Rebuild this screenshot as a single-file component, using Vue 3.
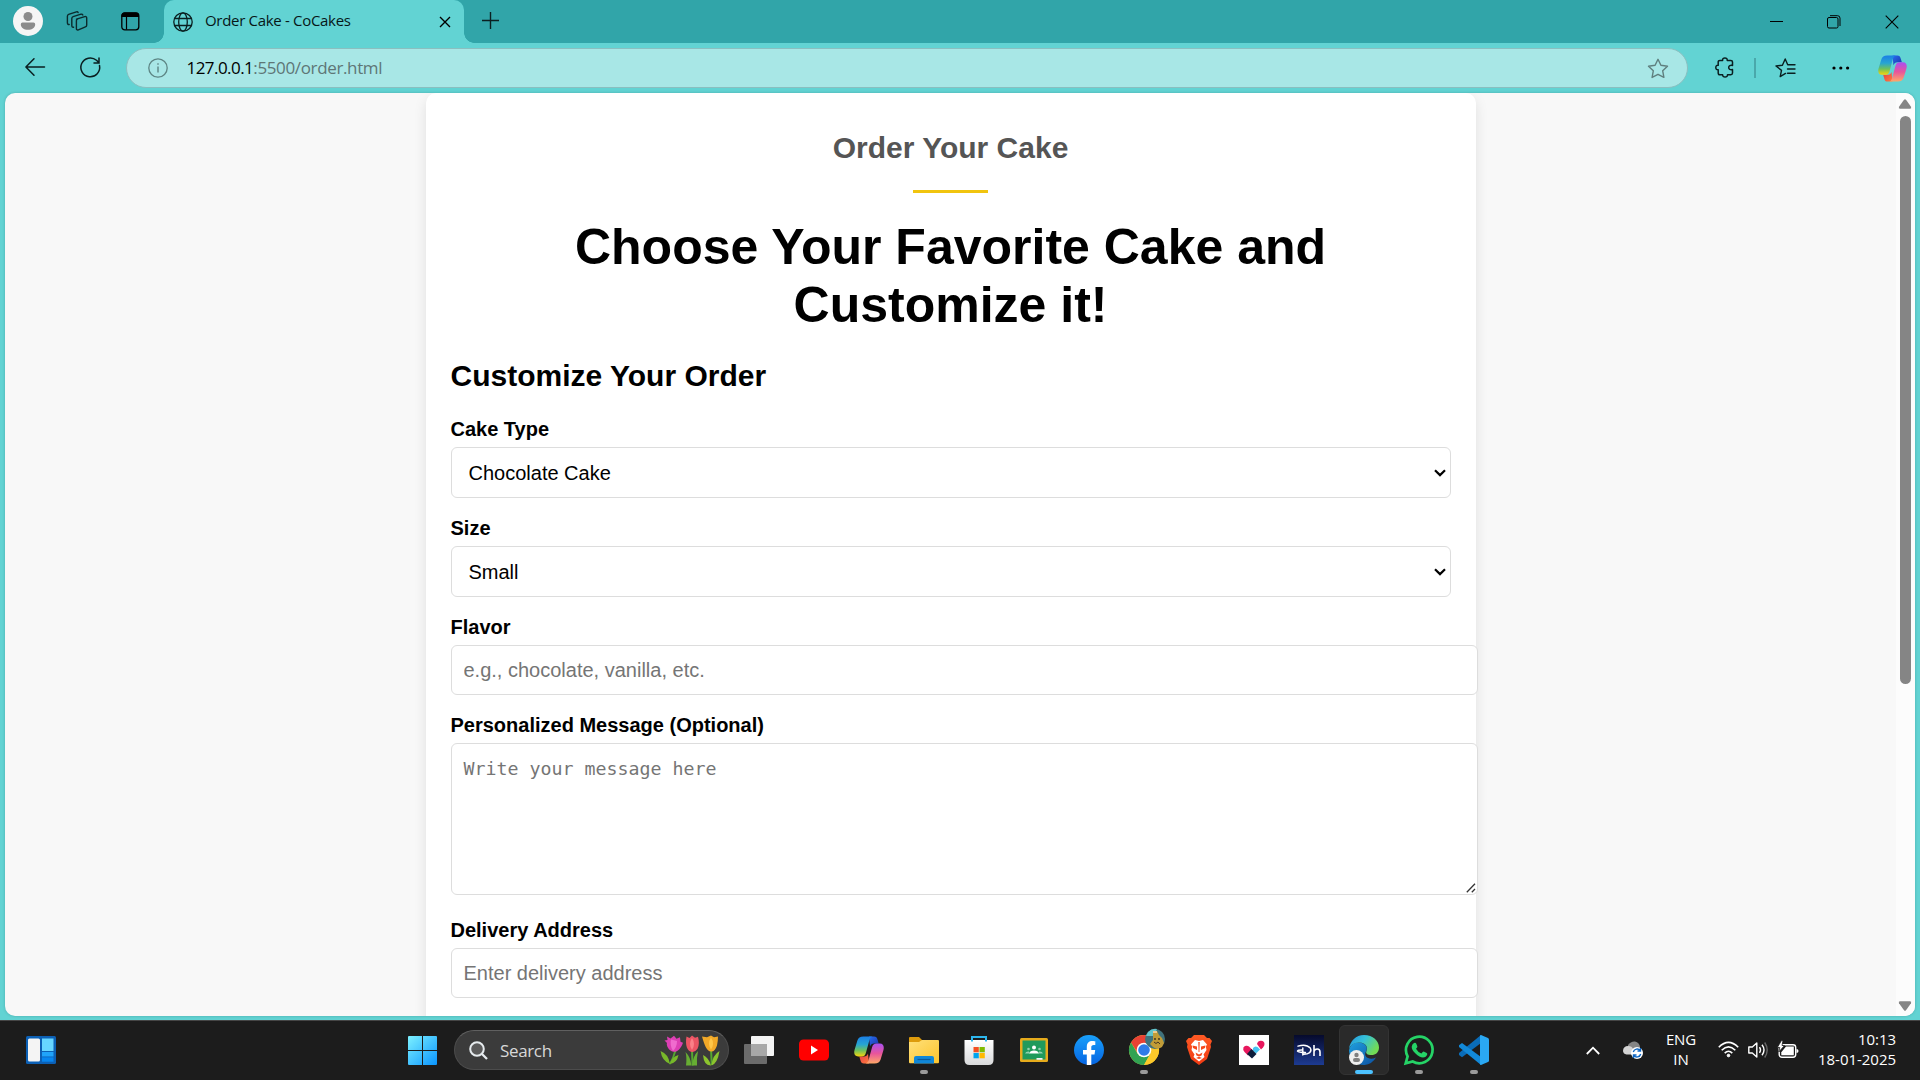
<script setup>
import { ref } from 'vue'

const cakeType = ref('Chocolate Cake')
const size = ref('Small')
const cakeTypes = ['Chocolate Cake', 'Vanilla Cake', 'Red Velvet Cake']
const sizes = ['Small', 'Medium', 'Large']

const apps = [
  { id: 'taskview' },
  { id: 'youtube' },
  { id: 'copilot' },
  { id: 'explorer', running: true },
  { id: 'store' },
  { id: 'classroom' },
  { id: 'facebook' },
  { id: 'chrome', running: true },
  { id: 'brave' },
  { id: 'heart' },
  { id: 'hotstar' },
  { id: 'edge', active: true },
  { id: 'whatsapp', running: true },
  { id: 'vscode', running: true }
]
</script>

<template>
  <div class="screen">
    <svg class="defs" width="0" height="0" aria-hidden="true">
      <defs>
        <linearGradient id="cpA" x1="0" y1="0" x2="0" y2="1">
          <stop offset="0" stop-color="#1b7fe6" /><stop offset=".4" stop-color="#27a5d2" />
          <stop offset=".7" stop-color="#6fc25b" /><stop offset="1" stop-color="#f7d40c" />
        </linearGradient>
        <linearGradient id="cpB" x1="0" y1="0" x2="0" y2="1">
          <stop offset="0" stop-color="#a850f2" /><stop offset=".5" stop-color="#e8559b" />
          <stop offset="1" stop-color="#ffa868" />
        </linearGradient>
        <linearGradient id="cpC" x1="0" y1="0" x2="1" y2="1">
          <stop offset="0" stop-color="#2a6cf0" /><stop offset="1" stop-color="#1835a8" />
        </linearGradient>
        <linearGradient id="cpD" x1="0" y1="0" x2="1" y2="1">
          <stop offset="0" stop-color="#e23c4a" /><stop offset="1" stop-color="#ff7d3c" />
        </linearGradient>
        <linearGradient id="winG" gradientUnits="userSpaceOnUse" x1="0" y1="0" x2="29" y2="29">
          <stop offset="0" stop-color="#7df1ff" /><stop offset="1" stop-color="#0a95ff" />
        </linearGradient>
        <linearGradient id="edgeA" x1="0" y1="0" x2="1" y2=".5">
          <stop offset="0" stop-color="#2394df" /><stop offset=".5" stop-color="#35c1d8" /><stop offset="1" stop-color="#72dc55" />
        </linearGradient>
        <linearGradient id="edgeB" x1="0" y1="0" x2="1" y2="1">
          <stop offset="0" stop-color="#1fa0e0" /><stop offset="1" stop-color="#0c50a0" />
        </linearGradient>
        <linearGradient id="fbG" x1="0" y1="0" x2="0" y2="1">
          <stop offset="0" stop-color="#19a0fa" /><stop offset="1" stop-color="#0564e2" />
        </linearGradient>
        <linearGradient id="folderG" x1="0" y1="0" x2="1" y2="1">
          <stop offset="0" stop-color="#ffe07a" /><stop offset="1" stop-color="#fcc42d" />
        </linearGradient>
        <linearGradient id="bagG" x1="0" y1="0" x2="0" y2="1">
          <stop offset="0" stop-color="#ffffff" /><stop offset="1" stop-color="#d9dadb" />
        </linearGradient>
        <linearGradient id="braveG" x1="0" y1="0" x2="0" y2="1">
          <stop offset="0" stop-color="#ff5a24" /><stop offset="1" stop-color="#f03a12" />
        </linearGradient>
        <linearGradient id="dhG" x1="0" y1="0" x2="0" y2="1">
          <stop offset="0" stop-color="#060a2c" /><stop offset="1" stop-color="#1d3b92" />
        </linearGradient>
        <symbol id="i-copilot" viewBox="0 0 30 28">
          <path d="M15 .5h5c2.200 0 3 1 3.500 3l1.200 4H20c-2 0-3.200 1-4 3z" fill="url(#cpC)" />
          <path d="M15 27.500H10c-2.200 0-3-1-3.500-3l-1.200-4H10c2 0 3.200-1 4-3z" fill="url(#cpD)" />
          <path d="M9.500.5h9c-1.700.3-2.500 1.500-3.200 4L12 16.500c-.9 3-2 4-4.500 4H4.200C.5 20.500-.4 17.300.6 13.800L3.400 4.600C4.300 1.800 6 .5 9.500.5z" fill="url(#cpA)" />
          <path d="M20.500 27.500h-9c1.700-.3 2.500-1.500 3.200-4L18 11.500c.9-3 2-4 4.500-4h3.300c3.700 0 4.600 3.200 3.600 6.700l-2.800 9.200c-.9 2.800-2.600 4.100-6.100 4.100z" fill="url(#cpB)" />
        </symbol>
      </defs>
    </svg>

    <header class="titlebar">
      <svg class="avatar" width="30" height="30" viewBox="0 0 30 30">
        <circle cx="15" cy="15" r="15" fill="#f5f5f5" />
        <circle cx="15" cy="10.500" r="4.500" fill="#8b8b8b" />
        <path d="M9.500 16.500h11q1.700 0 1.700 1.700c0 3.500-3 5.600-7.200 5.600s-7.200-2.100-7.200-5.600q0-1.700 1.700-1.700z" fill="#8b8b8b" />
      </svg>
      <svg class="spaces" width="22" height="22" viewBox="0 0 22 22" fill="none" stroke="#0b2a2c" stroke-width="1.400" stroke-linejoin="round" stroke-linecap="round">
        <path d="M10.500 9.200 18.700 6.600q2-.4 2 1.500v7.200q0 1.200-1.300 1.600l-7 2.900q-2 .6-2-1.400v-7.600q0-1.200 1.100-1.600z" />
        <path d="M7.600 17.200q-1.800.3-1.800-1.600V8.500q0-1.400 1.300-1.800l7.900-2.500q1.400-.3 1.800.8" />
        <path d="M3.200 14.500Q1.400 14.600 1.400 12.800V6.200q0-1.400 1.200-1.800L10.400 1.900q1.300-.3 1.700.6" />
      </svg>
      <svg class="tabs-icon" width="19" height="19" viewBox="0 0 19 19">
        <rect x=".8" y=".8" width="17" height="17" rx="3" fill="none" stroke="#000" stroke-width="1.300" />
        <path d="M.5 5V3.500Q.5.500 3.500.5h11.500q3 0 3 3V5z" />
        <path d="M5.500 5v12.500" stroke="#000" stroke-width="1.200" />
      </svg>
      <div class="tab">
        <svg width="20" height="20" viewBox="0 0 20 20" fill="none" stroke="#0a1f20" stroke-width="1.300">
          <circle cx="10" cy="10" r="9.200" /><ellipse cx="10" cy="10" rx="4.300" ry="9.200" /><path d="M1.500 6.500h17M1.500 13.500h17" />
        </svg>
        <span class="tab-title">Order Cake - CoCakes</span>
        <svg class="tab-close" width="12" height="12" viewBox="0 0 12 12" stroke="#000" stroke-width="1.400"><path d="M1 1l10 10M11 1 1 11" /></svg>
      </div>
      <svg class="plus" width="18" height="18" viewBox="0 0 18 18" stroke="#0a1f20" stroke-width="1.400"><path d="M8.500 0v17M0 8.500h17" /></svg>
      <div class="window-buttons">
        <svg width="13" height="13" viewBox="0 0 13 13"><path d="M0 6.500h13" stroke="#000" /></svg>
        <svg width="14" height="14" viewBox="0 0 14 14" fill="none" stroke="#000"><rect x=".5" y="2.500" width="10.500" height="10.500" rx="1.500" /><path d="M3 .7h7.500q2.500 0 2.500 2.500V11" /></svg>
        <svg width="14" height="14" viewBox="0 0 14 14" stroke="#000" stroke-width="1.100"><path d="M.7.7l12.600 12.600M13.300.7.7 13.300" /></svg>
      </div>
    </header>

    <div class="toolbar">
      <svg class="back" width="20" height="18" viewBox="0 0 20 18" fill="none" stroke="#0a1f20" stroke-width="1.500" stroke-linecap="round" stroke-linejoin="round"><path d="M9 .8.900 9 9 17.200M1 9h18.500" /></svg>
      <svg class="reload" width="21" height="21" viewBox="0 0 21 21" fill="none" stroke="#0a1f20" stroke-width="1.500" stroke-linecap="round"><path d="M19.500 8.500A9.400 9.400 0 1 1 16.500 3.300L19 5.800M19 1v4.900h-5" /></svg>
      <div class="address">
        <svg width="20" height="20" viewBox="0 0 20 20" fill="none" stroke="#5d8584" stroke-width="1.300"><circle cx="10" cy="10" r="9.200" /><path d="M10 8.500v6M10 5.200v1.500" stroke-width="1.400" /></svg>
        <span class="url"><b>127.0.0.1</b>:5500/order.html</span>
        <svg class="star" width="22" height="21" viewBox="0 0 22 21" fill="none" stroke="#5f7f7e" stroke-width="1.400" stroke-linejoin="round"><path d="M11 1.300l2.900 6 6.600.9-4.800 4.600 1.200 6.600L11 16.300l-5.900 3.100 1.200-6.600L1.500 8.200l6.600-.9z" /></svg>
      </div>
      <svg class="puzzle" width="20" height="21" viewBox="0 0 20 21" fill="none" stroke="#0a1f20" stroke-width="1.500" stroke-linejoin="round"><path d="M7.600 3.400C7.400 1.800 8.500.9 9.900.9s2.500.9 2.300 2.500h3.600q1.700 0 1.700 1.700v3.300c-2.300-.5-3.800.4-3.800 2.100s1.500 2.600 3.800 2.100v3.500q0 1.700-1.700 1.700h-3.300c.1 1.500-1 2.300-2.400 2.300s-2.600-.8-2.500-2.300H4.900q-1.700 0-1.700-1.700v-3.300C1.500 12.900.8 11.900.8 10.500s.9-2.400 2.400-2.200V5.100q0-1.700 1.700-1.700z" /></svg>
      <span class="divider"></span>
      <svg class="favs" width="21" height="20" viewBox="0 0 21 20" fill="none" stroke="#0a1f20" stroke-width="1.400" stroke-linejoin="round" stroke-linecap="round"><path d="M10.500 15.400 5.200 18.600l1.300-6.200L1 7.900l6.400-.7L10.200 1l2.500 5.700H20M12.500 11H20M12.500 15.200H20" /></svg>
      <svg class="dots" width="18" height="4" viewBox="0 0 18 4"><circle cx="2" cy="2" r="1.600" /><circle cx="8.800" cy="2" r="1.600" /><circle cx="15.600" cy="2" r="1.600" /></svg>
      <svg class="copilot-btn" width="29" height="27"><use href="#i-copilot" /></svg>
    </div>

    <div class="viewport">
      <main class="page">
        <section class="card">
          <h2 class="section-title">Order Your Cake</h2>
          <div class="rule"></div>
          <h1>Choose Your Favorite Cake and Customize it!</h1>
          <h2 class="form-title">Customize Your Order</h2>
          <form @submit.prevent>
            <label for="type">Cake Type</label>
            <div class="select-wrap">
              <select id="type" v-model="cakeType"><option v-for="c in cakeTypes" :key="c">{{ c }}</option></select>
              <svg class="caret" width="12" height="8" viewBox="0 0 12 8" fill="none" stroke="#000" stroke-width="2.200"><path d="M1 1.200l5 4.900 5-4.900" /></svg>
            </div>
            <label for="size">Size</label>
            <div class="select-wrap">
              <select id="size" v-model="size"><option v-for="s in sizes" :key="s">{{ s }}</option></select>
              <svg class="caret" width="12" height="8" viewBox="0 0 12 8" fill="none" stroke="#000" stroke-width="2.200"><path d="M1 1.200l5 4.900 5-4.900" /></svg>
            </div>
            <label for="flavor">Flavor</label>
            <input id="flavor" type="text" placeholder="e.g., chocolate, vanilla, etc." />
            <label for="msg">Personalized Message (Optional)</label>
            <div class="area-wrap">
              <textarea id="msg" placeholder="Write your message here"></textarea>
              <svg class="grip" width="10" height="10" viewBox="0 0 10 10" stroke="#333" stroke-width="1.300"><path d="M.8 9.200 9 .8M5.800 9.200 9 6" /></svg>
            </div>
            <label for="addr">Delivery Address</label>
            <input id="addr" type="text" placeholder="Enter delivery address" />
          </form>
        </section>
      </main>
      <div class="scrollbar">
        <svg width="14" height="10" viewBox="0 0 14 10"><path d="M6 .7q1-1 2 0l5 7q.8 1.800-1 2H2q-1.800-.2-1-2z" fill="#858585" /></svg>
        <div class="thumb"></div>
        <svg class="down" width="14" height="10" viewBox="0 0 14 10"><path d="M6 9.300q1 1 2 0l5-7q.8-1.800-1-2H2Q.2.500 1 2.300z" fill="#858585" /></svg>
      </div>
    </div>

    <footer class="taskbar">
      <svg class="widgets" width="30" height="28" viewBox="0 0 30 28">
        <rect width="30" height="28" rx="1.500" fill="#0c60b5" />
        <rect x="2" y="2.500" width="12" height="23" rx="1.500" fill="#f4f4f4" />
        <rect x="16" y="2.500" width="11.500" height="12.500" fill="#67d6ff" /><rect x="16" y="16" width="11.500" height="4.500" fill="#20a4fa" /><rect x="16" y="21.300" width="11.500" height="4.400" fill="#0786ef" />
      </svg>
      <svg class="start" width="29" height="29" viewBox="0 0 29 29" fill="url(#winG)"><path d="M1 0h13v14H0V1q0-1 1-1zM15 0h13q1 0 1 1v13H15zM0 15h14v14H1q-1 0-1-1zM15 15h14v13q0 1-1 1H15z" /></svg>
      <div class="search">
        <svg class="glass" width="19" height="19" viewBox="0 0 19 19" fill="#5a5a5a" stroke="#e6ebee" stroke-width="2"><circle cx="8" cy="8" r="6.800" /><path d="M13 13l5 5" stroke-width="2.300" /></svg>
        <span>Search</span>
        <svg class="tulips" width="60" height="31" viewBox="0 0 60 31">
          <g fill="#55a630"><path d="M9 29q4-7 5.500-14l2 .5q-2 7-6 14z" /><path d="M.5 16q8 3 9.500 13Q2 26 .5 16zM18.500 20q-7 2-8.500 9 7-1 8.500-9z" fill="#78b82a" /><path d="M31 14h2l.5 16.500h-2z" /><path d="M25.500 17q5 5 6 13.500h-5.500q1-8-.5-13.500zM38 16q-5 5-6 14.500h5q-.5-8 1-14.500z" fill="#67ad33" /><path d="M50 14h2l.8 16h-2z" /><path d="M43 20q6 3 8 10.500-7 .5-8-10.500zM59.500 16q-7 4-8 14.500 6-2 8-14.500z" fill="#8cc42e" /></g>
          <path d="M7 1.500l3.500 2L14 .8l2.500 3 3.500-1.500.5 4.500 2.500 1c-2 6-6 9.500-9.500 9C8.500 16 6 10 7 8L4.500 5.500l3-.5z" fill="#dd3fb4" /><path d="M11 4.500q-1.500 6 2 11.500 4-4 4-10" fill="#f06cce" />
          <path d="M26.500 1.500l3 1.500L32 .5l3 2.300 3-1q2 7-.5 12Q35 17.500 32 17c-5-.5-7-7-5.500-15.500z" fill="#ec5564" /><path d="M32 3q-4 6 0 12 4-6 0-12z" fill="#fb8088" />
          <path d="M42 1.500l5 .8L51 .5l3 1.800 4-.8q0 4-1 9-2 6-5.500 6c-5 .3-7-7-9.500-15z" fill="#f2a928" /><path d="M51 2.500q-4 6 0 12 4-6 0-12z" fill="#ffc648" />
        </svg>
      </div>
      <div class="apps">
        <div v-for="a in apps" :key="a.id" class="app" :class="{ active: a.active, running: a.running }">
          <svg v-if="a.id === 'taskview'" width="30" height="30" viewBox="0 0 30 30"><rect x="7" y="1" width="23" height="20" rx="1" fill="#f3f3f3" /><rect y="9" width="23" height="20" rx="1" fill="#6b6b6b" /><rect x="7" y="9" width="16" height="12" fill="#a8a8a8" /></svg>
          <svg v-else-if="a.id === 'youtube'" width="30" height="30" viewBox="0 0 30 30"><rect y="4.500" width="30" height="21" rx="4.500" fill="#f00" /><path d="M12 10.500v9l7-4.500z" fill="#fff" /></svg>
          <svg v-else-if="a.id === 'copilot'" width="30" height="28"><use href="#i-copilot" /></svg>
          <svg v-else-if="a.id === 'explorer'" width="30" height="30" viewBox="0 0 30 30"><path d="M1 2h9l3 3v6H0V3q0-1 1-1z" fill="#dd9b0c" /><path d="M0 7h10l3-2h16q1 0 1 1v21q0 1.300-1 1.300H1q-1 0-1-1.300z" fill="url(#folderG)" /><path d="M5 28.500V23q0-2 2-2h16q2 0 2 2v5.500z" fill="#1087d8" /><path d="M8.500 24.500h13" stroke="#0b5a9c" stroke-width="1.200" /></svg>
          <svg v-else-if="a.id === 'store'" width="30" height="30" viewBox="0 0 30 30"><path d="M8 8V2h14v6" fill="none" stroke="#2db7ee" stroke-width="2" /><path d="M.5 5h29v20q0 5-5 5h-19q-5 0-5-5z" fill="url(#bagG)" /><path d="M8 6.500V2M22 6.500V2" stroke="#2db7ee" stroke-width="2" /><path d="M9.500 12h5.300v5.300H9.500z" fill="#f25022" /><path d="M15.500 12h5.300v5.300h-5.300z" fill="#7fba00" /><path d="M9.500 18h5.300v5.300H9.500z" fill="#00a4ef" /><path d="M15.500 18h5.300v5.300h-5.300z" fill="#ffb900" /></svg>
          <svg v-else-if="a.id === 'classroom'" width="28" height="24" viewBox="0 0 28 24"><rect width="28" height="24" rx="1.500" fill="#e6ab1c" /><rect x="2.500" y="2.500" width="23" height="19" fill="#1f9a5b" /><g fill="#fff"><circle cx="14" cy="9.500" r="2" /><path d="M9 15.500q1-3 5-3t5 3z" /></g><g fill="#8fd0ae"><circle cx="8.500" cy="11" r="1.300" /><circle cx="19.500" cy="11" r="1.300" /><path d="M5 15.500q1-2.500 4-2v2zM23 15.500q-1-2.500-4-2v2z" /></g><path d="M16.500 20h6v1.800h-6z" fill="#f3f3f3" /></svg>
          <svg v-else-if="a.id === 'facebook'" width="30" height="30" viewBox="0 0 30 30"><circle cx="15" cy="15" r="15" fill="url(#fbG)" /><path d="M12.800 30V19.500H9V15h3.800v-3.200c0-3.800 2.200-5.800 5.600-5.800 1.400 0 2.900.3 2.900.3V10h-1.700c-1.700 0-2.300 1-2.300 2.200V15h3.900l-.7 4.500h-3.200V30z" fill="#fff" /></svg>
          <div v-else-if="a.id === 'chrome'" class="badged">
            <svg width="30" height="30" viewBox="0 0 30 30"><circle cx="15" cy="15" r="15" fill="#ffcd40" /><path d="M2 7.500A15 15 0 0 1 28 7.500L15 8.200 9 18.500z" fill="#e94134" /><path d="M2 7.500A15 15 0 0 0 15 30L21.500 18.500 15 22 8.500 18.500z" fill="#31a352" /><path d="M28 7.500A15 15 0 0 1 15 30L21.500 18.500 21 11 15 8z" fill="#fdc92a" /><path d="M28 7.500H15v2z" fill="#e94134" /><circle cx="15" cy="15" r="7.300" fill="#fff" /><circle cx="15" cy="15" r="5.800" fill="#2f7be8" /></svg>
            <svg class="pet" width="20" height="20" viewBox="0 0 20 20"><circle cx="10" cy="10" r="10" fill="#40727c" /><path d="M3 3q4-4 9-3L9 7H1z" fill="#62c4cb" /><path d="M8 3l4-1 2 4 3 3 2 5-2 4q-5 3-9 0l-3-3 3-4z" fill="#c19c37" /><path d="M9 13l2 1.500 2-1.500 2 2" stroke="#463722" fill="none" stroke-width="1" /><circle cx="10" cy="10" r=".9" fill="#32291e" /><circle cx="14" cy="10" r=".9" fill="#32291e" /><path d="M8 2h4v2H8z" fill="#edcb8f" /></svg>
          </div>
          <svg v-else-if="a.id === 'brave'" width="26" height="30" viewBox="0 0 26 30"><path d="M8 0h10l3 3h2.500L26 6l-1.500 3.500L25 12l-4 12-8 6-8-6L1 12l.5-2.500L0 6l2.500-3H5z" fill="url(#braveG)" /><path d="M9 5l4 1 4-1 4 4.500-1.200 2 .7 3.500-3 4.500 1 2.500L13 26.500 7.500 22l1-2.500-3-4.500.7-3.500-1.200-2z" fill="#fff" /><path d="M6.500 10.500l4.500 1v3.500l-4-2zM19.500 10.500l-4.500 1v3.500l4-2zM12.300 7h1.400l-.3 10h-.8zM9.500 17.500l3.500 2 3.500-2-1 3-2.500 1-2.500-1zM10 23l3-1.200 3 1.200-3 1z" fill="#f6491b" /></svg>
          <svg v-else-if="a.id === 'heart'" width="30" height="30" viewBox="0 0 30 30"><path d="M0 0h30v30H0z" fill="#fff" /><path d="M4.500 12.500a3.700 3.700 0 0 1 5.500-1l4 4-5 5-3.500-3.500q-2-2-1-4.500z" fill="#e8175d" /><path d="M18 9q1-3.500 4-3.300 3.500.3 3.500 3.300 0 1.700-1.500 3.500l-2 2z" fill="#e8175d" /><path d="M14 15.500V13q2-2.500 4.500-1l2.500 2.500-4 4z" fill="#48c4f2" /><path d="M12.500 14l5 5-4.500 4.500-5-4.500z" fill="#0d1c3a" /></svg>
          <svg v-else-if="a.id === 'hotstar'" width="30" height="30" viewBox="0 0 30 30"><path d="M0 0h30v30H0z" fill="url(#dhG)" /><path d="M4 11.200Q12 8.500 16.300 13c2.200 3.800-1.500 6.500-7.300 6.300M8.800 13v7M8.800 15Q4 14.800 3.500 16q1 1.500 8 1.500" fill="none" stroke="#fff" stroke-width="1.400" stroke-linecap="round" /><path d="M20 10v11M20 16.500q.7-2.500 3.200-2.500 2.800 0 2.800 3v4" fill="none" stroke="#fff" stroke-width="1.600" /></svg>
          <svg v-else-if="a.id === 'edge'" width="30" height="30" viewBox="0 0 30 30"><path d="M27 22.500A15 15 0 0 1 15.500 30 15 15 0 0 1 0 15.500C1 9.500 6 7 10.500 7.500c6 .6 9 5 6.500 9-3 4.800 3 9.500 10 6z" fill="url(#edgeB)" /><path d="M0 14C1 6 7 0 15 0c9 0 15 6 15 12.500 0 5-3.500 7.500-7.500 7.500-4 0-6.300-1.500-5-4 1.500-3 .2-8.500-7.500-8.500C4.500 7.500 1.500 10.500 0 14z" fill="url(#edgeA)" /><circle cx="7.500" cy="22.500" r="7.500" fill="#efefef" /><circle cx="7.500" cy="20" r="2.200" fill="#808080" /><rect x="4" y="23" width="7" height="4" rx="2" fill="#808080" /></svg>
          <svg v-else-if="a.id === 'whatsapp'" width="30" height="30" viewBox="0 0 30 30"><path d="M1.700 28.300l1.900-7A13.300 13.300 0 1 1 8.700 26.500z" fill="none" stroke="#25d366" stroke-width="2.700" /><path d="M10 8q1.500-1 2.300.7l1 2.600q.3.800-.4 1.500l-.9 1q2 3.600 5.400 4.800l1.300-1.500q.6-.8 1.500-.3l2.500 1.200q.8.500.5 1.500-1 3-4.200 3-3.500-.2-7.500-4T7.700 11.700Q8 9.300 10 8z" fill="#25d366" /></svg>
          <svg v-else width="30" height="30" viewBox="0 0 30 30"><path d="M22 0v8L3 22.200 0 20v-2z" fill="#0a6cb8" /><path d="M22 30v-8L3 8 0 10.200v1.900z" fill="#1289d8" /><path d="M22 0l7 3q1 .5 1 1.500v21q0 1-1 1.500l-7 3-1-.6V.6z" fill="#2aa8f3" /></svg>
        </div>
      </div>
      <div class="tray">
        <svg class="chev" width="14" height="9" viewBox="0 0 14 9" fill="none" stroke="#fff" stroke-width="1.800"><path d="M.8 8 7 1.700 13.200 8" /></svg>
        <svg class="cloud" width="20" height="18" viewBox="0 0 20 18"><path d="M5 4Q8 0 12 .5q4.500 1 5 5.500v6H5z" fill="#858585" /><path d="M0 9.500Q.5 5 5 5q4 0 5 3v5.500H3.500Q0 13 0 9.500z" fill="#d4d4d4" /><circle cx="14" cy="12" r="6" fill="#fff" /><path d="M10.300 11a4 4 0 0 1 7-1.500M17.700 13a4 4 0 0 1-7 1.500M17.500 7v3h-3M10.500 17v-3h3" fill="none" stroke="#0e66c2" stroke-width="1.400" /></svg>
        <div class="lang"><span>ENG</span><span>IN</span></div>
        <svg class="wifi" width="21" height="17" viewBox="0 0 21 17" fill="none" stroke="#fff" stroke-width="1.600"><path d="M.8 6.200q9.700-9.700 19.400 0M3.700 9.200q6.800-6.700 13.600 0M6.700 12.100q3.800-3.700 7.600 0" /><circle cx="10.500" cy="14.500" r="1.300" fill="#fff" stroke-width="1" /></svg>
        <svg class="sound" width="21" height="18" viewBox="0 0 21 18" fill="none" stroke="#fff" stroke-width="1.400" stroke-linejoin="round"><path d="M.8 6v6h3.500l4.500 4V2L4.300 6z" /><path d="M11.500 6.200q2 2.800 0 5.600M14 3.800q4 5.200 0 10.400" /><path d="M16.700 1.500q5 7.500 0 15" stroke="#666" /></svg>
        <svg class="battery" width="21" height="18" viewBox="0 0 21 18"><rect x="1.200" y="3.700" width="16.500" height="12.500" rx="2.700" fill="none" stroke="#fff" stroke-width="1.400" /><path d="M8 5.600h7.800v8.700H3.300v-3z" fill="#fff" /><path d="M18.500 8q2 0 2 2t-2 2z" fill="#fff" /><path d="M3.500-.5-.7 6.500h2.500L.8 11l5.700-6.500H4L5-.5z" fill="#fff" stroke="#1c1c1c" stroke-width=".8" /></svg>
        <div class="clock"><span>10:13</span><span>18-01-2025</span></div>
      </div>
    </footer>
  </div>
</template>

<style>
html, body { margin: 0; overflow: hidden; }
</style>

<style scoped>
.screen { width: 1920px; height: 1080px; display: flex; flex-direction: column; background: #62d3d3; font-family: "Open Sans", "Noto Sans", sans-serif; overflow: hidden; }
.screen svg { display: block; flex: none; overflow: visible; }
.defs { position: absolute; }

.titlebar { height: 43px; flex: none; background: #31a5a9; display: flex; align-items: center; padding-left: 13px; box-sizing: border-box; }
.avatar { margin-top: -1px; }
.spaces { margin: -1px 0 0 23px; }
.tabs-icon { margin: -1px 0 0 33px; }
.tab { position: relative; box-sizing: border-box; width: 300px; height: 43px; margin-left: 24px; padding: 0 13px 0 9px; display: flex; align-items: center; background: #62d3d3; border-radius: 10px 10px 0 0; }
.tab::before, .tab::after { content: ""; position: absolute; bottom: 0; width: 10px; height: 10px; }
.tab::before { left: -10px; background: radial-gradient(circle at 0 0, transparent 9.500px, #62d3d3 10px); }
.tab::after { right: -10px; background: radial-gradient(circle at 100% 0, transparent 9.500px, #62d3d3 10px); }
.tab-title { margin: -3px 0 0 12px; font-size: 15px; line-height: 20px; letter-spacing: -0.310px; white-space: nowrap; color: #071718; }
.tab-close { margin-left: auto; }
.plus { margin: -2px 0 0 18px; }
.window-buttons { margin-left: auto; display: flex; align-items: center; gap: 44px; padding-right: 21.500px; }

.toolbar { height: 50px; flex: none; display: flex; align-items: center; box-sizing: border-box; padding: 0 13px 0 24.500px; }
.reload { margin-left: 35px; }
.back, .reload { margin-top: -2px; }
.address { box-sizing: border-box; width: 1562px; height: 40px; margin-left: 25px; border: 1px solid #8abfc0; border-radius: 20px; background: #a8e7e6; display: flex; align-items: center; padding: 0 18px 0 21px; }
.url { margin-left: 19px; font-size: 17px; line-height: 24px; letter-spacing: -0.360px; color: #5e7676; margin-top: -1px; }
.url b { font-weight: 400; color: #000; letter-spacing: -0.550px; }
.star { margin-left: auto; }
.puzzle { margin-left: 27px; margin-top: -1px; }
.divider { width: 2px; height: 20px; background: #4aa8ab; margin-left: 19px; }
.favs { margin-left: 19px; }
.dots { margin-left: 36px; }
.copilot-btn { margin-left: auto; }

.viewport { height: 923px; flex: none; margin: 0 5px; display: flex; background: #f8f8f8; border-radius: 10px; overflow: hidden; box-shadow: 0 0 3px rgba(0, 60, 60, .25); }
.page { flex: 1; display: flex; justify-content: center; font-family: "Liberation Sans", Arial, sans-serif; }
.card { box-sizing: border-box; width: 1050px; height: 1100px; padding: 38px 25px; background: #fff; border-radius: 10px; box-shadow: 0 5px 12.500px rgba(0, 0, 0, .1); }
h1, h2 { margin: 0; font-weight: 700; color: #000; }
h2 { font-size: 30px; line-height: 34px; }
.section-title { text-align: center; color: #555; }
.rule { width: 75px; height: 3px; margin: 25px auto; background: #f1c40f; }
h1 { font-size: 50px; line-height: 58px; text-align: center; margin-bottom: 25px; }
.form-title { margin-bottom: 25px; }
label { display: block; font-size: 20px; line-height: 23px; font-weight: 700; margin: 19px 0 6px; }
form label:first-child { margin-top: 0; }
.select-wrap, .area-wrap { position: relative; }
select, input, textarea { display: block; border: 1px solid #ddd; border-radius: 6px; background: #fff; font: 20px "Liberation Sans", Arial, sans-serif; color: #000; outline: none; }
select { box-sizing: border-box; width: 100%; height: 51px; appearance: none; padding: 0 17px; }
.caret { position: absolute; right: 5px; top: 22px; }
input, textarea { box-sizing: border-box; width: 1027px; padding: 0 12px; }
input { height: 50px; }
.area-wrap { width: 1027px; padding-bottom: 5px; }
textarea { height: 152px; resize: none; padding-top: 13px; font: 18.280px/23px "DejaVu Sans Mono", monospace; }
input::placeholder, textarea::placeholder { color: #757575; opacity: 1; }
.grip { position: absolute; right: 2px; top: 140px; }
.scrollbar { width: 19px; flex: none; background: #fcfcfc; display: flex; flex-direction: column; align-items: center; padding: 6px 1px 5px 0; box-sizing: border-box; }
.thumb { width: 11px; height: 568px; margin-top: 7px; border-radius: 6px; background: #858585; }
.down { margin-top: auto; }

.taskbar { margin-top: 4px; height: 60px; flex: none; box-sizing: border-box; border-top: 1px solid #454545; padding-bottom: 1px; background: #1c1c1c; display: flex; align-items: center; color: #fff; }
.widgets { margin-left: 26px; }
.start { margin-left: 352px; }
.search { box-sizing: border-box; width: 275px; height: 40px; margin-left: 17px; padding: 0 8px 0 14px; border: 1px solid #4c4c4c; border-top-color: #606060; border-radius: 20px; background: #3b3b3b; display: flex; align-items: center; font-size: 17px; letter-spacing: -0.350px; color: #d8d8d8; }
.search span { margin-left: 12px; }
.tulips { margin-left: auto; }
.apps { display: flex; margin-left: 5px; }
.app { box-sizing: border-box; position: relative; width: 50px; height: 50px; margin-right: 5px; border: 1px solid transparent; border-radius: 6px; display: flex; align-items: center; justify-content: center; }
.app.active { background: #2a2a2a; border-color: #333; }
.app.running::after, .app.active::after { content: ""; position: absolute; left: 50%; bottom: 0; width: 8px; height: 4px; margin-left: -4px; border-radius: 2px; background: #9a9a9a; }
.app.active::after { width: 18px; margin-left: -9px; background: #4cc2ff; }
.badged { position: relative; }
.pet { position: absolute; left: 16px; top: -6px; }
.tray { margin-left: auto; display: flex; align-items: center; font-size: 15px; line-height: 20px; }
.cloud { margin-left: 23px; }
.lang { display: flex; flex-direction: column; align-items: center; width: 40px; margin: -2px 0 0 18px; letter-spacing: -0.100px; }
.wifi { margin: -1px 0 0 17px; }
.sound { margin-left: 9px; }
.battery { margin: -1px 0 0 9px; }
.clock { display: flex; flex-direction: column; align-items: flex-end; width: 97px; margin: -3px 24px 0 0; letter-spacing: -0.030px; }
</style>
